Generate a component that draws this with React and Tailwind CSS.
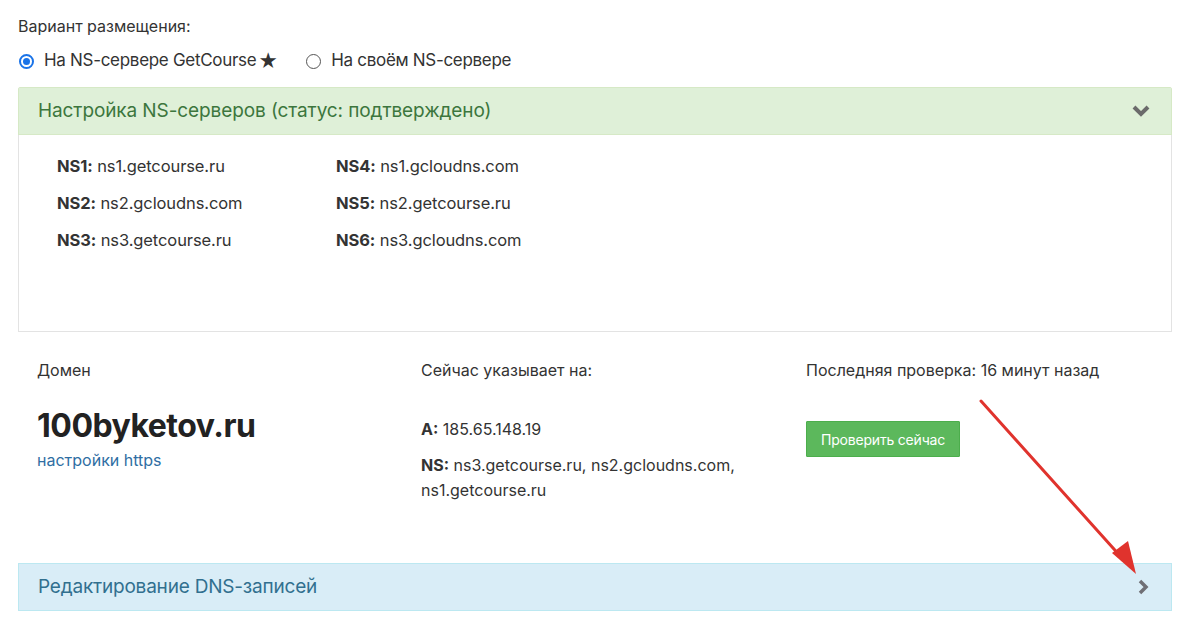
import React from 'react';

const nsLeft = [
  ['NS1:', 'ns1.getcourse.ru'],
  ['NS2:', 'ns2.gcloudns.com'],
  ['NS3:', 'ns3.getcourse.ru'],
];
const nsRight = [
  ['NS4:', 'ns1.gcloudns.com'],
  ['NS5:', 'ns2.getcourse.ru'],
  ['NS6:', 'ns3.gcloudns.com'],
];

const ChevronDown = () => (
  <svg width="20" height="14" viewBox="0 0 20 14">
    <path d="M3 3 L10 10 L17 3" fill="none" stroke="#6b6b6b" strokeWidth="4" strokeLinejoin="miter" />
  </svg>
);

const ChevronRight = () => (
  <svg width="12" height="18" viewBox="0 0 12 18">
    <path d="M3 3 L9 9 L3 15" fill="none" stroke="#6f6f75" strokeWidth="3.5" />
  </svg>
);

const NsList = ({ items }) => (
  <div className="flex flex-col gap-[14px]">
    {items.map(([k, v]) => (
      <div key={k} className="text-[16.5px] leading-[23px] text-[#333] tracking-[-0.1px]">
        <span className="font-bold">{k}</span> {v}
      </div>
    ))}
  </div>
);

export default function App() {
  return (
    <div className="relative w-[1200px] h-[643px] bg-white overflow-hidden font-['Inter',sans-serif] text-[#333]">
      <div className="pl-[18px] pr-[28px] pt-[15px]">
        <div className="text-[16px] leading-[22px] text-[#333]">Вариант размещения:</div>

        <div className="flex items-center mt-[12px] h-[24px] text-[17px]">
          <label className="flex items-center">
            <span className="w-[15px] h-[15px] rounded-full border-2 border-[#1a73e8] flex items-center justify-center ml-[1px]">
              <span className="w-[7px] h-[7px] rounded-full bg-[#1a73e8]" />
            </span>
            <span className="ml-[10px] tracking-[-0.3px]">На NS-сервере GetCourse</span>
            <span className="ml-[2px] text-[19px] leading-none">★</span>
          </label>
          <label className="flex items-center ml-[28px]">
            <span className="w-[15px] h-[15px] rounded-full border border-[#555]" />
            <span className="ml-[10px] tracking-[-0.3px]">На своём NS-сервере</span>
          </label>
        </div>

        <div className="mt-[14px] border border-[#d6e9c6] rounded-[2px]">
          <div className="h-[47px] bg-[#dff0d8] flex items-center justify-between pl-[19px] pr-[20px] border-b border-[#d6e9c6]">
            <span className="text-[19px] text-[#3c763d] tracking-[-0.1px]">Настройка NS-серверов (статус: подтверждено)</span>
            <ChevronDown />
          </div>
          <div className="h-[197px] bg-white border-x border-b border-[#e3e3e3] -mx-px -mb-px flex pl-[38px] pt-[20px]">
            <div className="w-[279px]"><NsList items={nsLeft} /></div>
            <NsList items={nsRight} />
          </div>
        </div>

        <div className="grid grid-cols-[384px_385px_1fr] px-[19px] mt-[27px] text-[16px]">
          <div>
            <div className="leading-[22px]">Домен</div>
            <div className="mt-[25px] text-[32px] font-bold leading-[40px] tracking-[-0.5px] text-[#222]">100byketov.ru</div>
            <a className="block mt-[3px] text-[16px] leading-[22px] text-[#2f6ea3]">настройки https</a>
          </div>
          <div>
            <div className="leading-[22px]">Сейчас указывает на:</div>
            <div className="mt-[37px] leading-[22px]"><b>A:</b> 185.65.148.19</div>
            <p className="mt-[13px] leading-[25px] w-[340px]">
              <b>NS:</b> ns3.getcourse.ru, ns2.gcloudns.com, ns1.getcourse.ru
            </p>
          </div>
          <div>
            <div className="leading-[22px]">Последняя проверка: 16 минут назад</div>
            <button className="mt-[40px] h-[36px] px-[14px] bg-[#5cb85c] border border-[#4cae4c] text-white text-[14px] tracking-[-0.2px] rounded-[1px]">
              Проверить сейчас
            </button>
          </div>
        </div>

        <div className="mt-[60px] h-[48px] bg-[#d9edf7] border border-[#bce8f1] flex items-center justify-between pl-[19px] pr-[22px]">
          <span className="text-[19px] text-[#31708f] tracking-[-0.2px]">Редактирование DNS-записей</span>
          <ChevronRight />
        </div>
      </div>

      <svg className="absolute left-0 top-0 pointer-events-none" width="1200" height="643">
        <line x1="981" y1="401" x2="1122" y2="558" stroke="#e0332d" strokeWidth="3" strokeLinecap="round" />
        <polygon points="1136,574 1112,553 1128,541" fill="#e0332d" />
      </svg>
    </div>
  );
}
